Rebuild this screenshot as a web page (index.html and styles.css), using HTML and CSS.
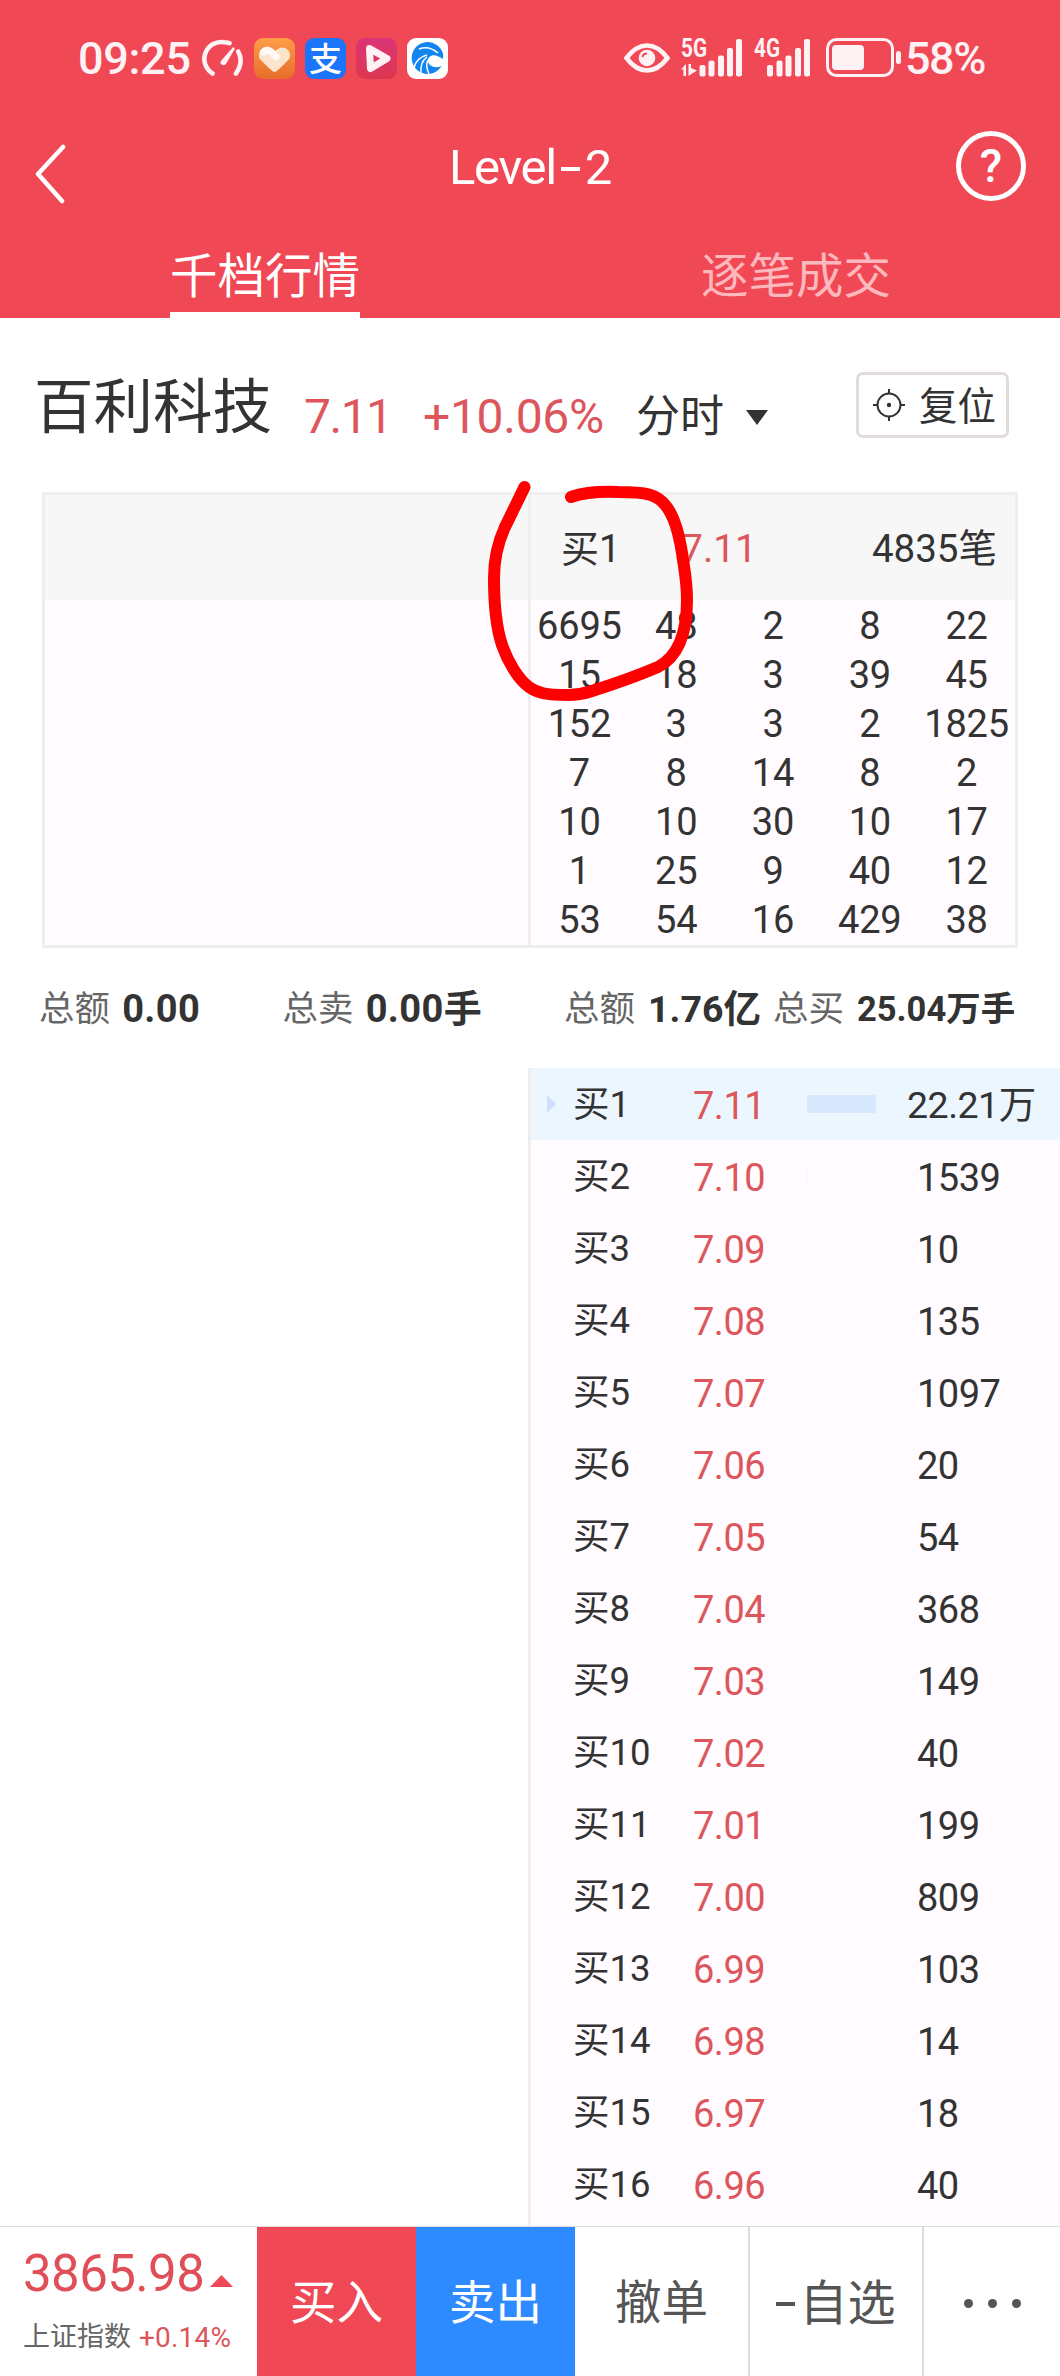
FILE: index.html
```html
<!DOCTYPE html>
<html lang="zh-CN">
<head>
<meta charset="utf-8">
<title>Level-2</title>
<link rel="stylesheet" href="styles.css">
</head>
<body>
<div class="screen">
  <header class="header">
    <div class="status">
      <span class="clock">09:25</span>
      <svg class="gauge" width="42" height="38" viewBox="0 0 42 38" fill="none" stroke="#fff2f4" stroke-width="4.6" stroke-linecap="round">
        <path d="M10.500 34.500A17 17 0 0 1 22 3.200Q25 3.200 27.500 4.200"/><path d="M36.200 12.500Q42 23 34 34.500"/>
        <path d="M31.500 9.500L20 22.500A1.500 1.500 0 0 0 23 24Z" fill="#fff2f4" stroke-width="2.500" stroke-linejoin="round"/>
      </svg>
      <svg class="app" width="41" height="41" viewBox="0 0 41 41">
        <defs><linearGradient id="orange" x1="0" y1="0" x2="0" y2="1"><stop offset="0" stop-color="#ff9d47"/><stop offset="1" stop-color="#e66d2c"/></linearGradient></defs>
        <rect width="41" height="41" rx="9" fill="url(#orange)"/>
        <path d="M20.500 34Q18 34 5.500 20.500C2.500 12 12 6 18 11.500L20.500 13.500L23 11.500C29 6 38.500 12 35.500 20.500Q23 34 20.500 34Z" fill="#fde4cc"/>
        <path d="M9.500 14Q13 10.500 17.500 14L22 19" fill="none" stroke="#fffaf4" stroke-width="7" stroke-linecap="round"/>
      </svg>
      <span class="app alipay">支</span>
      <svg class="app" width="41" height="41" viewBox="0 0 41 41">
        <defs><linearGradient id="pink" x1="0" y1="0" x2="0" y2="1"><stop offset="0" stop-color="#db3478"/><stop offset="1" stop-color="#dc374f"/></linearGradient></defs>
        <rect width="41" height="41" rx="9" fill="url(#pink)"/>
        <path d="M13.500 10.500L31 20.500L14.500 30.500Z" fill="none" stroke="#fff0f4" stroke-width="7" stroke-linejoin="round"/>
      </svg>
      <svg class="app" width="41" height="41" viewBox="0 0 41 41">
        <rect width="41" height="41" rx="9" fill="#fff"/>
        <path d="M35.500 14A16 16 0 1 0 34.500 28Q28 31 23 27C17 21 25 12 35.500 21Q37 18 35.500 14Z" fill="#1285ef"/>
        <g fill="none" stroke="#fff" stroke-width="1.500"><path d="M7 30Q9 20 20 17"/><path d="M14 35Q13 24 20 19"/><path d="M22 36Q18 27 21 22"/><path d="M12 11Q22 7 31 15"/></g>
      </svg>
      <svg class="eye" width="46" height="30" viewBox="0 0 46 30">
        <path d="M2.500 15Q12 2.500 23 2.500T43.500 15Q34 27.500 23 27.500T2.500 15Z" fill="none" stroke="#fff2f4" stroke-width="4.600"/>
        <circle cx="23" cy="15" r="8.300" fill="#fff2f4"/><path d="M18.500 14Q19 10.500 23 10.500" fill="none" stroke="#f04854" stroke-width="2"/>
      </svg>
      <svg class="signal5" width="64" height="56" viewBox="0 -8 64 56" fill="#fff2f4">
        <text x="0" y="19" class="net" textLength="26" lengthAdjust="spacingAndGlyphs">5G</text>
        <path d="M5 26V38H2.500V31.500H0ZM7.500 38V26H10V30L16 32.500Z"/>
        <rect x="18.500" y="27" width="6" height="11.500" rx="2"/><rect x="27.500" y="22.500" width="6" height="16" rx="2"/><rect x="37" y="17.500" width="6" height="21" rx="2"/><rect x="46" y="10" width="6" height="28.500" rx="2"/><rect x="55" y="1" width="6" height="37.500" rx="2"/>
      </svg>
      <svg class="signal4" width="58" height="56" viewBox="0 -8 58 56" fill="#fff2f4">
        <text x="0" y="19" class="net" textLength="26" lengthAdjust="spacingAndGlyphs">4G</text>
        <rect x="13" y="27" width="6" height="11.500" rx="2"/><rect x="22.500" y="22.500" width="6" height="16" rx="2"/><rect x="31.500" y="17.500" width="6" height="21" rx="2"/><rect x="41" y="10" width="6" height="28.500" rx="2"/><rect x="50" y="1" width="6" height="37.500" rx="2"/>
      </svg>
      <svg class="battery" width="76" height="40" viewBox="0 0 76 40" fill="#fff2f4">
        <rect x="1.500" y="1.500" width="65" height="36" rx="9" fill="none" stroke="#fff2f4" stroke-width="3"/>
        <rect x="6" y="7" width="32" height="25" rx="4"/><rect x="70" y="13" width="5" height="13" rx="2.500"/>
      </svg>
      <span class="percent">58%</span>
    </div>
    <nav class="nav">
      <svg class="back" width="34" height="60" viewBox="0 0 34 60" fill="none" stroke="#fff" stroke-width="4.500" stroke-linecap="round" stroke-linejoin="round"><path d="M29 3L4 30L28 57"/></svg>
      <h1 class="nav-title">Level<span class="dash"></span>2</h1>
      <span class="help">?</span>
    </nav>
    <div class="tabs">
      <div class="tab active"><span>千档行情</span></div>
      <div class="tab"><span>逐笔成交</span></div>
    </div>
  </header>

  <section class="stock">
    <span class="stock-name">百利科技</span>
    <span class="stock-price">7.11</span>
    <span class="stock-change">+10.06%</span>
    <span class="period">分时</span>
    <svg class="caret" width="22" height="15" viewBox="0 0 22 15"><path d="M0 0H22L11 15Z" fill="#333"/></svg>
    <button class="reset">
      <svg width="32" height="32" viewBox="0 0 32 32" fill="none" stroke="#333" stroke-width="2"><circle cx="16" cy="16" r="11.500"/><path d="M16 0V5M16 27V32M0 16H5M27 16H32"/><circle cx="16" cy="16" r="2.200" fill="#333" stroke="none"/></svg>
      <span>复位</span>
    </button>
  </section>

  <section class="queue">
    <div class="side"><div class="side-head"></div></div>
    <div class="side buy">
      <div class="side-head"><span class="level">买1</span><span class="red level-price">7.11</span><span class="count">4835笔</span></div>
      <div class="orders">
        <span>6695</span><span>48</span><span>2</span><span>8</span><span>22</span>
        <span>15</span><span>18</span><span>3</span><span>39</span><span>45</span>
        <span>152</span><span>3</span><span>3</span><span>2</span><span>1825</span>
        <span>7</span><span>8</span><span>14</span><span>8</span><span>2</span>
        <span>10</span><span>10</span><span>30</span><span>10</span><span>17</span>
        <span>1</span><span>25</span><span>9</span><span>40</span><span>12</span>
        <span>53</span><span>54</span><span>16</span><span>429</span><span>38</span>
      </div>
    </div>
    <svg class="mark" width="220" height="230" viewBox="480 475 220 230" fill="none" stroke="#f00" stroke-width="12" stroke-linecap="round" stroke-linejoin="round">
      <path d="M524.500 487L505 527Q494 551 494 578C494 606 497 630 502 645C508 662 518 679 529 687C537 693 546 695 568 695Q580 695 592 691Q630 679 658 667Q687 652 687 600C687 580 684 568 682 553C679 534 674 516 666 506C657 494 646 492 618 492Q588 491 571 497"/>
    </svg>
  </section>

  <section class="totals">
    <div class="total-half sell-total">
      <span class="label">总额</span><b>0.00</b>
      <span class="label second">总卖</span><b>0.00手</b>
    </div>
    <div class="total-half buy-total">
      <span class="label">总额</span><b>1.76亿</b>
      <span class="label second">总买</span><b class="compact">25.04万手</b>
    </div>
  </section>

  <main class="book">
    <div class="bids">
      <div class="bid selected"><span class="arrow"></span><span class="name">买1</span><span class="price">7.11</span><span class="bar"><i style="width:69px"></i></span><span class="qty">22.21万</span></div>
      <div class="bid"><span class="arrow"></span><span class="name">买2</span><span class="price">7.10</span><span class="bar"><i style="width:1px"></i></span><span class="qty">1539</span></div>
      <div class="bid"><span class="arrow"></span><span class="name">买3</span><span class="price">7.09</span><span class="bar"></span><span class="qty">10</span></div>
      <div class="bid"><span class="arrow"></span><span class="name">买4</span><span class="price">7.08</span><span class="bar"></span><span class="qty">135</span></div>
      <div class="bid"><span class="arrow"></span><span class="name">买5</span><span class="price">7.07</span><span class="bar"></span><span class="qty">1097</span></div>
      <div class="bid"><span class="arrow"></span><span class="name">买6</span><span class="price">7.06</span><span class="bar"></span><span class="qty">20</span></div>
      <div class="bid"><span class="arrow"></span><span class="name">买7</span><span class="price">7.05</span><span class="bar"></span><span class="qty">54</span></div>
      <div class="bid"><span class="arrow"></span><span class="name">买8</span><span class="price">7.04</span><span class="bar"></span><span class="qty">368</span></div>
      <div class="bid"><span class="arrow"></span><span class="name">买9</span><span class="price">7.03</span><span class="bar"></span><span class="qty">149</span></div>
      <div class="bid"><span class="arrow"></span><span class="name">买10</span><span class="price">7.02</span><span class="bar"></span><span class="qty">40</span></div>
      <div class="bid"><span class="arrow"></span><span class="name">买11</span><span class="price">7.01</span><span class="bar"></span><span class="qty">199</span></div>
      <div class="bid"><span class="arrow"></span><span class="name">买12</span><span class="price">7.00</span><span class="bar"></span><span class="qty">809</span></div>
      <div class="bid"><span class="arrow"></span><span class="name">买13</span><span class="price">6.99</span><span class="bar"></span><span class="qty">103</span></div>
      <div class="bid"><span class="arrow"></span><span class="name">买14</span><span class="price">6.98</span><span class="bar"></span><span class="qty">14</span></div>
      <div class="bid"><span class="arrow"></span><span class="name">买15</span><span class="price">6.97</span><span class="bar"></span><span class="qty">18</span></div>
      <div class="bid"><span class="arrow"></span><span class="name">买16</span><span class="price">6.96</span><span class="bar"></span><span class="qty">40</span></div>
    </div>
  </main>

  <footer class="footer">
    <div class="index">
      <div class="index-value">3865.98<svg width="23" height="12" viewBox="0 0 23 12"><path d="M11.500 0L23 12H0Z" fill="#f04854"/></svg></div>
      <div class="index-name"><span>上证指数</span><span class="index-change">+0.14%</span></div>
    </div>
    <div class="action buy-btn">买入</div>
    <div class="action sell-btn">卖出</div>
    <div class="action cancel">撤单</div>
    <div class="action favorite"><span class="minus"></span>自选</div>
    <div class="action more"><i></i><i></i><i></i></div>
  </footer>
</div>
</body>
</html>
```

FILE: styles.css
```css
* { box-sizing: border-box; margin: 0; padding: 0; }
body {
  width: 1060px;
  background: #fff;
  color: #333;
  font-family: Roboto, "Noto Sans CJK SC", sans-serif;
  font-size: 38px;
  line-height: 1;
}
.screen { width: 1060px; height: 2376px; display: flex; flex-direction: column; overflow: hidden; }
svg { display: block; flex: none; }
.red { color: #dc565c; }

.header { height: 318px; background: #f04854; color: #fff; }
.status { height: 116px; padding-left: 78px; display: flex; align-items: center; color: #fff2f4; }
.clock { width: 124px; font-size: 45px; font-weight: 500; letter-spacing: -0.300px; }
.gauge { margin-right: 10px; }
.app { width: 41px; height: 41px; margin-right: 10px; }
.alipay { background: #1b75fb; border-radius: 9px; color: #fff; font: 500 33px/39px "Noto Sans CJK SC", sans-serif; text-align: center; }
.eye { margin-left: 166px; }
.signal5 { margin-left: 11px; }
.signal4 { margin-left: 9px; }
.net { font: 700 25px Roboto, sans-serif; }
.battery { margin-left: 14px; }
.percent { margin-left: 3px; font-size: 45px; font-weight: 500; letter-spacing: -1.500px; }

.nav { height: 100px; padding: 0 34px; display: flex; align-items: center; justify-content: space-between; }
.back { margin-top: 16px; margin-right: 36px; }
.nav-title { display: flex; align-items: center; padding-top: 2px; font-size: 49px; font-weight: 400; letter-spacing: -1.300px; }
.dash { width: 19px; height: 4px; margin: 4px 5px 0; background: #fff; }
.help { width: 70px; height: 70px; border: 5px solid #fff; border-radius: 50%; font-size: 46px; font-weight: 500; line-height: 60px; text-align: center; }

.tabs { height: 102px; display: flex; }
.tab { flex: 1; display: flex; justify-content: center; font-size: 47.500px; line-height: 123px; color: #fdb8bd; }
.tab.active { color: #fff; }
.tab span { height: 102px; }
.tab:not(.active) span { padding-left: 2px; }
.active span { border-bottom: 6px solid #fff; }

.stock { height: 174px; padding: 0 51px 0 34px; display: flex; line-height: 70px; }
.stock-name { width: 270px; padding-top: 55px; font-size: 59.500px; }
.stock-price, .stock-change { padding-top: 64px; font-size: 48px; color: #dc565c; }
.stock-price { width: 119px; letter-spacing: -1.500px; }
.stock-change { width: 213px; letter-spacing: -0.300px; }
.period { width: 110px; padding-top: 64px; font-size: 44px; }
.caret { margin-top: 92px; }
.reset { width: 153px; height: 66px; margin: 54px 0 0 auto; padding-left: 14px; display: flex; align-items: center; gap: 14px; border: 3px solid #e1dbde; border-radius: 7px; background: #fff; color: #333; font: 38.500px/60px Roboto, "Noto Sans CJK SC", sans-serif; }
.reset span { padding-top: 3px; }

.queue { position: relative; height: 456px; width: 976px; margin-left: 42px; display: flex; border: 3px solid #eee; background: #fffbff; }
.side { width: 483px; }
.side.buy { width: 487px; border-left: 3px solid #eee; }
.side-head { height: 105px; padding: 3px 18px 0 30px; display: flex; align-items: center; background: #f7f7f7; font-size: 39px; }
.level { width: 120px; font-size: 38px; }
.count { margin-left: auto; font-size: 38.500px; }
.orders { display: grid; grid-template-columns: repeat(5, 1fr); grid-auto-rows: 49px; font-size: 38px; line-height: 53px; letter-spacing: -0.200px; text-align: center; }
.mark { position: absolute; left: 435px; top: -20px; }

.totals { height: 120px; display: flex; line-height: 122px; font-size: 35.500px; }
.total-half { display: flex; white-space: nowrap; }
.sell-total { width: 525px; padding-left: 39px; }
.buy-total { padding-left: 39px; }
.label { width: 84px; color: #666; }
.totals b { width: 161px; font-size: 38px; }
.sell-total .second { margin-left: 1px; }
.sell-total b { letter-spacing: 0.400px; }
.buy-total b { width: 125px; font-size: 37.500px; }
.buy-total b.compact { width: auto; font-size: 34.500px; }

.book { height: 1158px; }
.bids { width: 532px; height: 1158px; margin-left: 528px; border-left: 3px solid #eee; background: #fffbff; }
.bid { height: 72px; display: flex; align-items: center; padding-left: 16px; }
.arrow { width: 26px; height: 18px; }
.selected .arrow { border: solid transparent; border-width: 9px 17px 9px 9px; border-left-color: #cddff9; }
.name, .price, .qty { padding-top: 3px; }
.name { width: 120px; font-size: 36.500px; }
.price { width: 114px; color: #dc565c; letter-spacing: -0.500px; }
.bar { width: 110px; }
.bar i { display: block; height: 18px; background: #fdf4f8; }
.qty { letter-spacing: -0.500px; }
.selected { background: #ebf6ff; }
.selected .bar { width: 100px; }
.selected .bar i { background: #d9e9fd; }
.selected .qty { font-size: 37.500px; }

.footer { height: 150px; display: flex; border-top: 1px solid #dcdcdc; }
.index { width: 257px; padding: 22px 0 0 23px; white-space: nowrap; }
.index-value { height: 46px; display: flex; font-size: 51px; line-height: 50px; color: #e04e57; letter-spacing: -0.600px; }
.index-value svg { margin: 26px 0 0 6px; }
.index-name { display: flex; gap: 8px; margin-top: 27px; font-size: 27px; line-height: 31px; color: #666; }
.index-change { font-size: 28px; color: #dc565c; letter-spacing: 0.200px; }
.action { display: flex; align-items: center; justify-content: center; font-size: 46.500px; color: #555; padding-top: 4px; }
.buy-btn { width: 159px; background: #f04854; color: #fff; }
.sell-btn { width: 159px; background: #2e8bff; color: #fff; }
.cancel, .favorite { width: 175px; border-right: 2px solid #dcdcdc; }
.favorite { width: 174px; font-size: 48px; }
.minus { width: 19px; height: 4px; margin-right: 4px; background: #555; }
.more { flex: 1; gap: 15px; }
.more i { width: 9px; height: 9px; border-radius: 50%; background: #555; }
```
